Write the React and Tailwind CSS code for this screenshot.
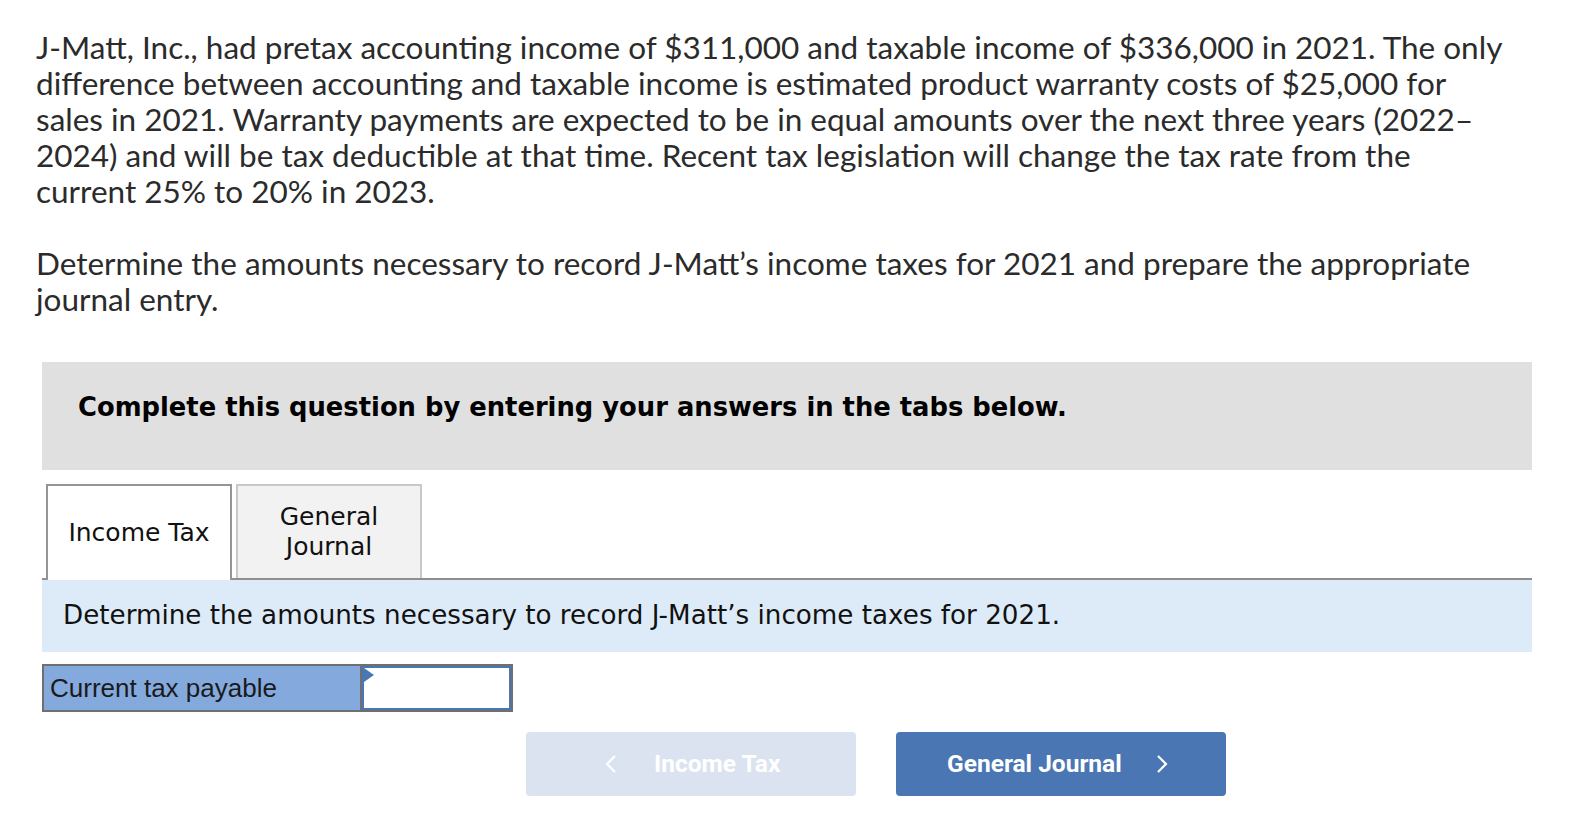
import React from "react";

const para1 = [
  "J-Matt, Inc., had pretax accounting income of $311,000 and taxable income of $336,000 in 2021. The only",
  "difference between accounting and taxable income is estimated product warranty costs of $25,000 for",
  "sales in 2021. Warranty payments are expected to be in equal amounts over the next three years (2022–",
  "2024) and will be tax deductible at that time. Recent tax legislation will change the tax rate from the",
  "current 25% to 20% in 2023.",
];
const para2 = [
  "Determine the amounts necessary to record J-Matt’s income taxes for 2021 and prepare the appropriate",
  "journal entry.",
];

export default function App() {
  return (
    <div className="w-[1578px] h-[826px] overflow-hidden bg-white">
      <div className="pl-[36px] pt-[29px] text-[#2b2b2b] font-['Lato',sans-serif] text-[31.5px] leading-[36px]">
        <p>
          {para1.map((l, i) => (
            <span key={i} className="block whitespace-nowrap">{l}</span>
          ))}
        </p>
        <p className="mt-[36px]">
          {para2.map((l, i) => (
            <span key={i} className="block whitespace-nowrap">{l}</span>
          ))}
        </p>
      </div>

      <div className="ml-[42px] w-[1490px] mt-[45px]">
        <div className="h-[108px] bg-[#e0e0e0] pl-[36px] pt-[30px]">
          <div className="font-['DejaVu_Sans',sans-serif] font-bold text-[25.8px] leading-[30px] text-black">
            Complete this question by entering your answers in the tabs below.
          </div>
        </div>

        <div className="mt-[14px] flex items-end gap-[4px] pl-[4px] border-b-2 border-[#8f8f8f] font-['DejaVu_Sans',sans-serif] text-[25px] text-[#111]">
          <div className="w-[186px] h-[96px] -mb-[2px] bg-white border-2 border-b-0 border-[#959595] flex items-center justify-center">
            Income Tax
          </div>
          <div className="w-[186px] h-[94px] bg-[#f2f2f2] border-2 border-b-0 border-[#c8c8c8] flex items-center justify-center text-center leading-[30px]">
            General
            <br />
            Journal
          </div>
        </div>

        <div className="h-[72px] bg-[#ddebf8] flex items-center pl-[21px] font-['DejaVu_Sans',sans-serif] text-[26.2px] text-[#111]">
          Determine the amounts necessary to record J-Matt’s income taxes for 2021.
        </div>

        <div className="mt-[12px] flex w-[471px] h-[48px] border-2 border-[#6f6f6f]">
          <div className="w-[318px] bg-[#84a9dd] border-r-2 border-[#6f6f6f] flex items-center pl-[6px] font-['Liberation_Sans',sans-serif] text-[26px] text-[#1a1a1a]">
            Current tax payable
          </div>
          <div className="relative flex-1 bg-white border-2 border-[#4a76b4]">
            <svg className="absolute left-0 top-0" width="12" height="16" viewBox="0 0 12 16">
              <polygon points="0,0 10,7 0,14" fill="#4a76b4" />
            </svg>
          </div>
        </div>

        <div className="mt-[20px] ml-[484px] flex gap-[40px] font-['Roboto',sans-serif] font-bold text-[24.5px] text-white">
          <div className="w-[330px] h-[64px] rounded-[4px] bg-[#dae3ef] flex items-center pl-[79px] gap-[37px]">
            <svg width="12" height="20" viewBox="0 0 12 20">
              <polyline points="10,2 2,10 10,18" fill="none" stroke="white" strokeWidth="2.2" />
            </svg>
            <span>Income Tax</span>
          </div>
          <div className="w-[330px] h-[64px] rounded-[4px] bg-[#4a76b4] flex items-center pl-[51px] gap-[34px]">
            <span>General Journal</span>
            <svg width="12" height="20" viewBox="0 0 12 20">
              <polyline points="2,2 10,10 2,18" fill="none" stroke="white" strokeWidth="2.2" />
            </svg>
          </div>
        </div>
      </div>
    </div>
  );
}
